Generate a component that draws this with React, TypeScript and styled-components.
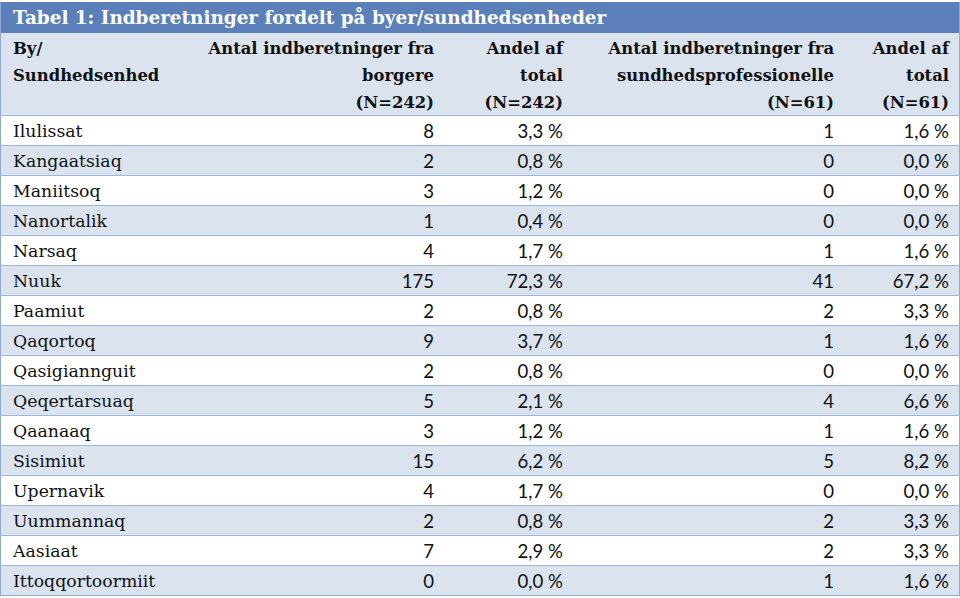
import React from "react";
import styled, { createGlobalStyle } from "styled-components";

const Global = createGlobalStyle`
  html, body { margin: 0; padding: 0; background: #ffffff; }
  body { width: 960px; height: 598px; overflow: hidden; }
`;

const serif = `"DejaVu Serif", "Liberation Serif", serif`;
const sans = `Lato, "Liberation Sans", sans-serif`;

const Wrap = styled.div`
  width: 960px;
  padding-top: 2px;
  box-sizing: border-box;
`;

const Table = styled.div`
  border-left: 1px solid #8eaad6;
  border-right: 1px solid #8eaad6;
  border-bottom: 1px solid #8eaad6;
  display: grid;
  grid-template-columns: 195px 248px 129px 271px 115px;
`;

const Title = styled.div`
  grid-column: 1 / -1;
  background: #5b80b9;
  color: #ffffff;
  font-family: ${serif};
  font-weight: bold;
  font-size: 18.4px;
  height: 31px;
  line-height: 31px;
  padding-left: 12px;
  white-space: nowrap;
`;

const HeadCell = styled.div<{ $left?: boolean }>`
  background: #dbe3ef;
  font-family: ${serif};
  font-weight: bold;
  font-size: 16.4px;
  line-height: 27px;
  height: 82px;
  box-sizing: border-box;
  padding: 2px 10px 0 12px;
  text-align: ${(p) => (p.$left ? "left" : "right")};
  color: #111;
  white-space: nowrap;
`;

const Cell = styled.div<{ $alt: boolean; $num?: boolean }>`
  background: ${(p) => (p.$alt ? "#dbe3ef" : "#ffffff")};
  border-top: 1px solid #9fb6dc;
  height: 30px;
  box-sizing: border-box;
  line-height: 30px;
  padding: 0 10px 0 12px;
  font-family: ${(p) => (p.$num ? sans : serif)};
  font-size: ${(p) => (p.$num ? "18.6px" : "17.3px")};
  text-align: ${(p) => (p.$num ? "right" : "left")};
  color: #111;
  white-space: nowrap;
`;

const rows: [string, string, string, string, string][] = [
  ["Ilulissat", "8", "3,3 %", "1", "1,6 %"],
  ["Kangaatsiaq", "2", "0,8 %", "0", "0,0 %"],
  ["Maniitsoq", "3", "1,2 %", "0", "0,0 %"],
  ["Nanortalik", "1", "0,4 %", "0", "0,0 %"],
  ["Narsaq", "4", "1,7 %", "1", "1,6 %"],
  ["Nuuk", "175", "72,3 %", "41", "67,2 %"],
  ["Paamiut", "2", "0,8 %", "2", "3,3 %"],
  ["Qaqortoq", "9", "3,7 %", "1", "1,6 %"],
  ["Qasigiannguit", "2", "0,8 %", "0", "0,0 %"],
  ["Qeqertarsuaq", "5", "2,1 %", "4", "6,6 %"],
  ["Qaanaaq", "3", "1,2 %", "1", "1,6 %"],
  ["Sisimiut", "15", "6,2 %", "5", "8,2 %"],
  ["Upernavik", "4", "1,7 %", "0", "0,0 %"],
  ["Uummannaq", "2", "0,8 %", "2", "3,3 %"],
  ["Aasiaat", "7", "2,9 %", "2", "3,3 %"],
  ["Ittoqqortoormiit", "0", "0,0 %", "1", "1,6 %"],
];

export default function App() {
  return (
    <Wrap>
      <Global />
      <Table>
        <Title>Tabel 1: Indberetninger fordelt på byer/sundhedsenheder</Title>
        <HeadCell $left>
          By/
          <br />
          Sundhedsenhed
        </HeadCell>
        <HeadCell>
          Antal indberetninger fra
          <br />
          borgere
          <br />
          (N=242)
        </HeadCell>
        <HeadCell>
          Andel af
          <br />
          total
          <br />
          (N=242)
        </HeadCell>
        <HeadCell>
          Antal indberetninger fra
          <br />
          sundhedsprofessionelle
          <br />
          (N=61)
        </HeadCell>
        <HeadCell>
          Andel af
          <br />
          total
          <br />
          (N=61)
        </HeadCell>
        {rows.map((r, i) =>
          r.map((v, j) => (
            <Cell key={`${i}-${j}`} $alt={i % 2 === 1} $num={j > 0}>
              {v}
            </Cell>
          ))
        )}
      </Table>
    </Wrap>
  );
}
